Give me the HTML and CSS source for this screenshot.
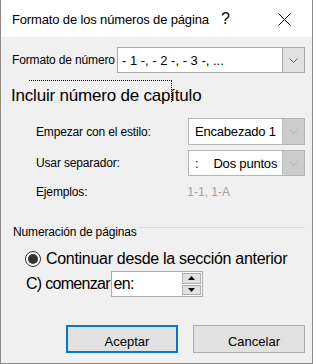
FILE: index.html
```html
<!DOCTYPE html>
<html lang="es">
<head>
<meta charset="utf-8">
<link rel="stylesheet" href="styles.css">
</head>
<body>
<div class="win">
  <div class="titlebar">
    <span class="title">Formato de los números de página</span>
    <span class="help">?</span>
    <svg class="close" width="13" height="13" viewBox="0 0 13 13"><path d="M0.5 0.5 L12.5 12.5 M12.5 0.5 L0.5 12.5" stroke="#000" stroke-width="1" fill="none"/></svg>
  </div>
  <div class="body">
    <div class="row fmt-row">
      <span class="lbl">Formato de número</span>
      <div class="select fmt-select">
        <span class="sel-text">- 1 -, - 2 -, - 3 -, ...</span>
        <span class="drop"><svg width="9" height="5" viewBox="0 0 9 5"><path d="M0.5 0.5 L4.5 4.5 L8.5 0.5" stroke="#606060" fill="none"/></svg></span>
      </div>
    </div>
    <div class="chapter">
      <span class="focus"></span>
      <span class="chapter-text">Incluir número de capítulo</span>
    </div>
    <div class="row sub-row">
      <span class="lbl">Empezar con el estilo:</span>
      <div class="select small-select">
        <span class="sel-text">Encabezado 1</span>
        <span class="drop disabled"><svg width="9" height="5" viewBox="0 0 9 5"><path d="M0.5 0.5 L4.5 4.5 L8.5 0.5" stroke="#b4b4b4" fill="none"/></svg></span>
      </div>
    </div>
    <div class="row sub-row sep-row">
      <span class="lbl">Usar separador:</span>
      <div class="select small-select">
        <span class="sel-text"><span class="colon">:</span>Dos puntos</span>
        <span class="drop disabled"><svg width="9" height="5" viewBox="0 0 9 5"><path d="M0.5 0.5 L4.5 4.5 L8.5 0.5" stroke="#b4b4b4" fill="none"/></svg></span>
      </div>
    </div>
    <div class="row ex-row">
      <span class="lbl">Ejemplos:</span>
      <span class="examples">1-1, 1-A</span>
    </div>
    <div class="group-head">
      <span class="group-title">Numeración de páginas</span>
      <span class="group-line"></span>
    </div>
    <div class="radio-row">
      <span class="radio"><span class="dot"></span></span>
      <span class="big">Continuar desde la sección anterior</span>
    </div>
    <div class="start-row">
      <span class="big start-lbl">C) comenzar en:</span>
      <div class="spin">
        <div class="spin-btns">
          <span class="spin-btn"><svg width="7" height="4" viewBox="0 0 7 4"><path d="M0 4 L3.5 0 L7 4 Z" fill="#000"/></svg></span>
          <span class="spin-btn"><svg width="7" height="4" viewBox="0 0 7 4"><path d="M0 0 L3.5 4 L7 0 Z" fill="#000"/></svg></span>
        </div>
      </div>
    </div>
    <div class="buttons">
      <button class="btn default"><span>Aceptar</span></button>
      <button class="btn"><span>Cancelar</span></button>
    </div>
  </div>
</div>
</body>
</html>
```

FILE: styles.css
```css
* { box-sizing: border-box; }
html, body { margin: 0; padding: 0; }
body {
  width: 313px;
  height: 364px;
  overflow: hidden;
  font-family: "Liberation Sans", Arial, sans-serif;
  color: #000;
}
.win {
  width: 313px;
  height: 364px;
  border: 1px solid #8c8c8c;
  border-top: none;
  background: #f0f0f0;
  display: flex;
  flex-direction: column;
}
.titlebar {
  height: 37px;
  flex: none;
  background: #fff;
  display: flex;
  align-items: center;
  padding-left: 11px;
  padding-right: 21px;
  white-space: nowrap;
}
.title {
  font-size: 13px;
  line-height: 16px;
  letter-spacing: -0.15px;
  margin-top: 2px;
}
.help {
  font-size: 16px;
  margin-left: auto;
  margin-top: 1px;
}
.close {
  margin-left: 48px;
  margin-top: 1px;
  flex: none;
}
.body {
  flex: 1;
  padding: 10px 7px 0 11px;
  display: flex;
  flex-direction: column;
}
.row {
  display: flex;
  align-items: center;
  white-space: nowrap;
}
.lbl {
  font-size: 12px;
  letter-spacing: -0.15px;
  flex: none;
}
.select {
  height: 26px;
  border: 1px solid #a9a9a9;
  background: #fff;
  display: flex;
  align-items: center;
  margin-left: auto;
  flex: none;
}
.fmt-select { width: 188px; }
.sel-text {
  flex: 1;
  font-size: 13px;
  padding-left: 4px;
  white-space: nowrap;
}
.drop {
  width: 22px;
  height: 100%;
  background: #e1e1e1;
  border-left: 1px solid #a9a9a9;
  display: flex;
  align-items: center;
  justify-content: center;
}
.drop.disabled { background: #cccccc; border-left-color: #bfbfbf; }
.chapter {
  position: relative;
  margin-top: 12px;
  height: 22px;
  white-space: nowrap;
}
.focus {
  position: absolute;
  left: 17px;
  top: -5px;
  width: 143px;
  height: 22px;
  border-top: 1px dotted #000;
  border-right: 1px dotted #000;
}
.chapter-text {
  font-size: 17px;
  line-height: 22px;
  margin-left: -1px;
  letter-spacing: -0.2px;
}
.sub-row { padding-left: 24px; margin-top: 11px; }
.small-select {
  width: 117px;
  height: 27px;
  border-color: #b4b4b4;
}
.sep-row { margin-top: 5px; }
.sep-row .small-select { height: 26px; }
.small-select .sel-text { padding-left: 6px; letter-spacing: -0.2px; }
.colon { margin-right: 15px; }
.ex-row { padding-left: 24px; margin-top: 9px; }
.examples {
  font-size: 12px;
  color: #a0a0a0;
  margin-left: 100px;
}
.group-head {
  display: flex;
  align-items: flex-start;
  margin-top: 26px;
  white-space: nowrap;
}
.group-title {
  font-size: 12px;
  line-height: 14px;
  margin-left: 1px;
  letter-spacing: -0.15px;
}
.group-line {
  flex: 1;
  height: 1px;
  background: #dcdcdc;
  margin-top: 2px;
  margin-left: 2px;
}
.radio-row {
  display: flex;
  align-items: center;
  margin-top: 10px;
  padding-left: 13px;
  white-space: nowrap;
}
.radio {
  width: 16px;
  height: 16px;
  flex: none;
  border: 1px solid #333;
  border-radius: 50%;
  background: #fff;
  display: flex;
  align-items: center;
  justify-content: center;
  margin-right: 5px;
}
.dot {
  width: 10px;
  height: 10px;
  border-radius: 50%;
  background: #333;
}
.big {
  font-size: 16px;
  line-height: 20px;
  letter-spacing: -0.3px;
}
.start-row {
  display: flex;
  align-items: center;
  margin-top: 2px;
  padding-left: 14px;
  white-space: nowrap;
}
.start-lbl {
  position: relative;
  z-index: 1;
  letter-spacing: -0.7px;
  margin-right: -23px;
}
.spin {
  width: 92px;
  height: 26px;
  flex: none;
  border: 1px solid #adadad;
  background: #fff;
  display: flex;
  justify-content: flex-end;
  padding: 1px;
}
.spin-btns {
  width: 19px;
  display: flex;
  flex-direction: column;
  gap: 1px;
}
.spin-btn {
  flex: 1;
  background: #e1e1e1;
  border: 1px solid #adadad;
  display: flex;
  align-items: center;
  justify-content: center;
}
.buttons {
  display: flex;
  gap: 15px;
  margin-top: 28px;
  padding-left: 54px;
}
.btn {
  width: 112px;
  height: 28px;
  background: #e1e1e1;
  border: 1px solid #adadad;
  font-family: "Liberation Sans", Arial, sans-serif;
  font-size: 13px;
  color: #000;
  padding: 5px 0 0 10px;
}
.btn.default { border: 2px solid #0078d7; }
```
